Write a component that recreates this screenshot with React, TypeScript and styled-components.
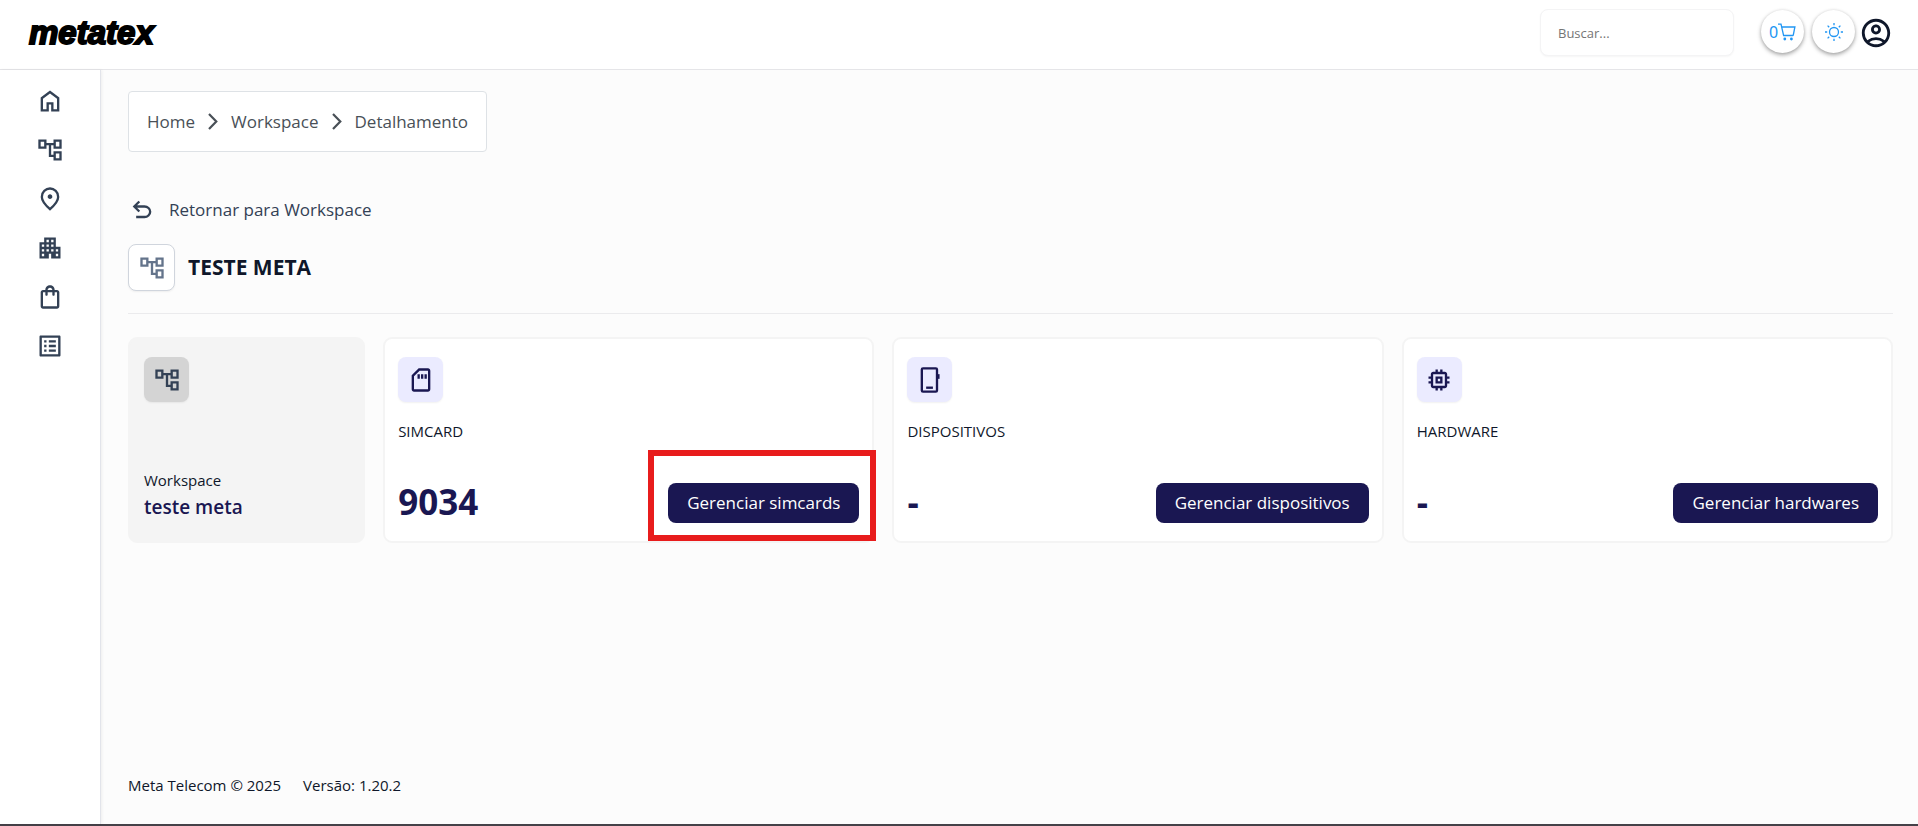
import React from 'react';
import styled, { createGlobalStyle, css } from 'styled-components';
import {
  MdApartment,
  MdListAlt,
  MdOutlineAccountCircle,
  MdOutlineAccountTree,
  MdOutlineMemory,
  MdOutlineSdCard,
  MdOutlineShoppingBag,
} from 'react-icons/md';

const navy = '#1a1752';
const slate = '#334155';
const blue = '#2196f3';

const GlobalStyle = createGlobalStyle`
  *, *::before, *::after { box-sizing: border-box; }
  body {
    margin: 0;
    background: #fcfcfc;
    color: #0f172a;
    font-family: "Open Sans", "Noto Sans", sans-serif;
    font-size: 15px;
    line-height: 22px;
  }
  a { color: inherit; text-decoration: none; }
  button { font: inherit; cursor: pointer; }
  svg { display: block; flex: none; }
`;

const Page = styled.div`
  display: flex;
  flex-direction: column;
  min-height: 100vh;
  border-bottom: 2px solid #454148;
`;

const Header = styled.header`
  display: flex;
  align-items: center;
  justify-content: space-between;
  height: 70px;
  padding: 0 25px 4px 29px;
  background: #fff;
  border-bottom: 1px solid #e5e5e8;
`;

const Logo = styled.a`
  color: #000;
  font: italic 700 33px/40px "Liberation Sans", Arial, sans-serif;
  -webkit-text-stroke: 2px #000;
`;

const HeaderTools = styled.div`
  display: flex;
  align-items: center;
`;

const SearchInput = styled.input`
  width: 194px;
  height: 47px;
  margin-right: 27px;
  padding: 0 17px;
  border: 1px solid #f4f4f5;
  border-radius: 8px;
  background: #fff;
  box-shadow: 0 1px 2px rgba(0, 0, 0, 0.04);
  font: 13px/20px "Open Sans", sans-serif;
  &::placeholder { color: #757575; opacity: 1; }
`;

const RoundButton = styled.button`
  display: flex;
  align-items: center;
  justify-content: center;
  width: 43px;
  height: 43px;
  margin: 0 8px 2px 0;
  padding: 0;
  border: 0;
  border-radius: 50%;
  background: #fff;
  color: ${blue};
  box-shadow: 0 2px 4px rgba(0, 0, 0, 0.35), 0 0 3px rgba(0, 0, 0, 0.08);
  font-family: "Noto Sans", sans-serif;
  font-size: 16px;
`;

const AccountButton = styled.button`
  margin-left: -4px;
  padding: 0;
  border: 0;
  background: none;
  color: #0f172a;
`;

const Body = styled.div`
  display: flex;
  flex: 1;
`;

const Sidebar = styled.nav`
  display: flex;
  flex-direction: column;
  align-items: center;
  gap: 21px;
  width: 101px;
  padding-top: 17px;
  background: #fff;
  border-right: 1px solid #e2e4ea;
  box-shadow: 1px 0 3px rgba(0, 0, 0, 0.06);
  color: ${slate};
`;

const Main = styled.main`
  display: flex;
  flex: 1;
  flex-direction: column;
  min-width: 0;
  padding: 21px 25px 28px 27px;
`;

const Breadcrumb = styled.nav`
  display: flex;
  align-items: center;
  align-self: flex-start;
  gap: 13px;
  height: 61px;
  padding: 0 18px;
  border: 1px solid #dee2e6;
  border-radius: 4px;
  background: #fff;
  color: #495057;
  font-size: 17px;
`;

const ReturnLink = styled.a`
  display: flex;
  align-items: center;
  align-self: flex-start;
  gap: 13px;
  height: 28px;
  margin-top: 44px;
  color: ${slate};
  font-size: 17px;
`;

const TitleRow = styled.div`
  display: flex;
  align-items: center;
  gap: 13px;
  margin-top: 20px;
  padding-bottom: 22px;
  border-bottom: 1px solid #ebebed;
`;

const TitleIcon = styled.span`
  display: flex;
  align-items: center;
  justify-content: center;
  width: 47px;
  height: 47px;
  border: 1px solid #d0d5dd;
  border-radius: 8px;
  background: #fff;
  color: #64748b;
  box-shadow: 0 1px 2px rgba(0, 0, 0, 0.06);
`;

const Title = styled.h1`
  margin: 0;
  padding-bottom: 2px;
  font-size: 21px;
  font-weight: 700;
  line-height: 28px;
`;

const Cards = styled.section`
  display: grid;
  grid-template-columns: minmax(200px, 237fr) repeat(3, minmax(320px, 491fr));
  gap: 18px;
  margin-top: 23px;
`;

const Card = styled.article<{ $muted?: boolean }>`
  display: flex;
  flex-direction: column;
  min-height: 206px;
  padding: 18px 13px;
  border: 2px solid #f4f4f4;
  border-radius: 9px;
  background: #fff;
  ${({ $muted }) => $muted && css`
    padding: 18px 14px;
    background: #f4f4f4;
  `}
`;

const IconTile = styled.span<{ $muted?: boolean }>`
  display: flex;
  align-items: center;
  justify-content: center;
  width: 45px;
  height: 45px;
  border-radius: 8px;
  background: ${({ $muted }) => ($muted ? '#d4d4d4' : '#ebebff')};
  color: ${({ $muted }) => ($muted ? slate : navy)};
  box-shadow: 0 1px 2px rgba(0, 0, 0, 0.06);
`;

const CardLabel = styled.h2`
  margin: 18px 0 0;
  font-size: 15px;
  font-weight: 400;
  line-height: 22px;
`;

const CardFoot = styled.div`
  display: flex;
  align-items: center;
  justify-content: space-between;
  height: 40px;
  margin-top: auto;
`;

const Count = styled.strong`
  padding-bottom: 2px;
  color: ${navy};
  font-size: 35px;
  font-weight: 700;
  line-height: 40px;
`;

const WorkspaceInfo = styled.div`
  margin-top: auto;
  line-height: 22px;
`;

const WorkspaceName = styled.div`
  color: ${navy};
  font-size: 19px;
  font-weight: 600;
  line-height: 32px;
`;

const ManageWrap = styled.div<{ $highlight?: boolean }>`
  position: relative;
  ${({ $highlight }) => $highlight && css`
    &::after {
      content: "";
      position: absolute;
      inset: -33px -17px -18px -20px;
      border: 6px solid #e81c1c;
      pointer-events: none;
    }
  `}
`;

const ManageButton = styled.button`
  height: 40px;
  padding: 0 19px;
  border: 0;
  border-radius: 8px;
  background: ${navy};
  color: #fff;
  font-size: 17px;
  font-weight: 400;
`;

const Footer = styled.footer`
  display: flex;
  gap: 22px;
  margin-top: auto;
`;

type IconProps = { size?: number };

const HomeIcon = ({ size = 28 }: IconProps) => (
  <svg width={size} height={size} viewBox="0 0 24 24" fill="currentColor" aria-hidden="true">
    <path d="M6 19h3v-6h6v6h3v-9l-6-4.5L6 10zm-2 2V9l8-6 8 6v12h-7v-6h-2v6z" />
  </svg>
);

const PinIcon = ({ size = 28 }: IconProps) => (
  <svg width={size} height={size} viewBox="0 0 24 24" fill="currentColor" aria-hidden="true">
    <path d="M12 12q.825 0 1.413-.587T14 10t-.587-1.412T12 8t-1.412.588T10 10t.588 1.413T12 12m0 7.35q3.05-2.8 4.525-5.087T18 10.2q0-2.725-1.737-4.462T12 4T7.738 5.738T6 10.2q0 1.775 1.475 4.063T12 19.35M12 22q-4.025-3.425-6.012-6.362T4 10.2q0-3.75 2.413-5.975T12 2t5.588 2.225T20 10.2q0 2.5-1.987 5.438T12 22" />
  </svg>
);

const UndoIcon = ({ size = 28 }: IconProps) => (
  <svg width={size} height={size} viewBox="0 0 24 24" fill="currentColor" aria-hidden="true">
    <path d="M7 19v-2h7.1q1.575 0 2.738-1T18 13.5T16.838 11T14.1 10H7.8l2.6 2.6L9 14L4 9l5-5l1.4 1.4L7.8 8h6.3q2.425 0 4.163 1.575T20 13.5t-1.737 3.925T14.1 19z" />
  </svg>
);

const PhoneIcon = ({ size = 28 }: IconProps) => (
  <svg width={size} height={size} viewBox="0 0 24 24" fill="none" stroke="currentColor" strokeWidth="2" aria-hidden="true">
    <rect x="5" y="2" width="13" height="20" rx="1" />
    <path d="M8.7 18.6h5.8" />
    <path d="M19.4 7v4" strokeWidth="1.6" />
  </svg>
);

const ChevronIcon = () => (
  <svg width="10" height="17" viewBox="0 0 10 17" fill="none" stroke="currentColor" strokeWidth="2.2" aria-hidden="true">
    <path d="M1 1l7.3 7.5L1 16" />
  </svg>
);

const CartIcon = () => (
  <svg width="18" height="18" viewBox="0 0 18 18" fill="none" stroke="currentColor" strokeWidth="1.3" aria-hidden="true">
    <path d="M0 1.2h3l2.6 11.3h9.6M3.6 4h13.3l-1.7 8.5" />
    <circle cx="6.8" cy="16" r="1.4" fill="currentColor" stroke="none" />
    <circle cx="13.4" cy="16" r="1.4" fill="currentColor" stroke="none" />
  </svg>
);

const SunIcon = () => (
  <svg width="18" height="18" viewBox="0 0 18 18" fill="none" stroke="currentColor" strokeWidth="1.3" aria-hidden="true">
    <circle cx="9" cy="9" r="4.5" />
    <path d="M9 0v2.2M9 15.8V18M0 9h2.2M15.8 9H18M2.6 2.6l1.6 1.6M13.8 13.8l1.6 1.6M15.4 2.6l-1.6 1.6M4.2 13.8l-1.6 1.6" />
  </svg>
);

const navItems = [
  { label: 'Início', icon: <HomeIcon /> },
  { label: 'Workspace', icon: <MdOutlineAccountTree size={28} /> },
  { label: 'Localização', icon: <PinIcon /> },
  { label: 'Empresas', icon: <MdApartment size={28} /> },
  { label: 'Loja', icon: <MdOutlineShoppingBag size={28} /> },
  { label: 'Relatórios', icon: <MdListAlt size={28} /> },
];

const resources = [
  { label: 'SIMCARD', count: '9034', action: 'Gerenciar simcards', icon: <MdOutlineSdCard size={28} />, highlight: true },
  { label: 'DISPOSITIVOS', count: '-', action: 'Gerenciar dispositivos', icon: <PhoneIcon /> },
  { label: 'HARDWARE', count: '-', action: 'Gerenciar hardwares', icon: <MdOutlineMemory size={28} /> },
];

export default function App() {
  return (
    <>
      <GlobalStyle />
      <Page>
        <Header>
          <Logo href="#">metatex</Logo>
          <HeaderTools>
            <SearchInput type="search" placeholder="Buscar..." aria-label="Buscar" />
            <RoundButton type="button" aria-label="Carrinho">
              0<CartIcon />
            </RoundButton>
            <RoundButton type="button" aria-label="Tema claro">
              <SunIcon />
            </RoundButton>
            <AccountButton type="button" aria-label="Conta">
              <MdOutlineAccountCircle size={34} />
            </AccountButton>
          </HeaderTools>
        </Header>
        <Body>
          <Sidebar aria-label="Menu">
            {navItems.map((item) => (
              <a key={item.label} href="#" aria-label={item.label}>{item.icon}</a>
            ))}
          </Sidebar>
          <Main>
            <Breadcrumb aria-label="Trilha">
              <a href="#">Home</a>
              <ChevronIcon />
              <a href="#">Workspace</a>
              <ChevronIcon />
              <span>Detalhamento</span>
            </Breadcrumb>
            <ReturnLink href="#">
              <UndoIcon />
              Retornar para Workspace
            </ReturnLink>
            <TitleRow>
              <TitleIcon><MdOutlineAccountTree size={28} /></TitleIcon>
              <Title>TESTE META</Title>
            </TitleRow>
            <Cards>
              <Card $muted>
                <IconTile $muted><MdOutlineAccountTree size={28} /></IconTile>
                <WorkspaceInfo>
                  Workspace
                  <WorkspaceName>teste meta</WorkspaceName>
                </WorkspaceInfo>
              </Card>
              {resources.map((r) => (
                <Card key={r.label}>
                  <IconTile>{r.icon}</IconTile>
                  <CardLabel>{r.label}</CardLabel>
                  <CardFoot>
                    <Count>{r.count}</Count>
                    <ManageWrap $highlight={r.highlight}>
                      <ManageButton type="button">{r.action}</ManageButton>
                    </ManageWrap>
                  </CardFoot>
                </Card>
              ))}
            </Cards>
            <Footer>
              <span>Meta Telecom © 2025</span>
              <span>Versão: 1.20.2</span>
            </Footer>
          </Main>
        </Body>
      </Page>
    </>
  );
}
